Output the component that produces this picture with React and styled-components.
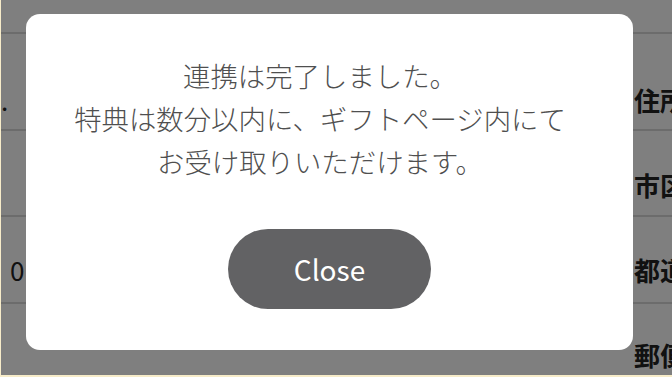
import React from "react";
import styled, { createGlobalStyle } from "styled-components";

const Global = createGlobalStyle`
  html, body { margin: 0; padding: 0; }
  body {
    background: #f7ecc9;
    font-family: "Noto Sans CJK JP", "Noto Sans", sans-serif;
  }
`;

const Page = styled.div`
  position: relative;
  margin-left: 1px;
  width: 671px;
  height: 375px;
  overflow: hidden;
  background: #ffffff;
`;

const Table = styled.div`
  display: flex;
  flex-direction: column;
`;

const Row = styled.div`
  display: flex;
  justify-content: space-between;
  align-items: flex-start;
  height: ${(p) => p.$h}px;
  padding-top: ${(p) => p.$pt}px;
  box-sizing: border-box;
  border-bottom: 2px solid #d9d9d9;
  flex-shrink: 0;
`;

const Value = styled.div`
  font-family: "Noto Sans CJK JP", sans-serif;
  font-size: 26px;
  line-height: 30px;
  color: #222;
  padding-left: ${(p) => p.$pl}px;
`;

const Label = styled.div`
  width: 38px;
  white-space: nowrap;
  overflow: hidden;
  font-family: "Noto Sans CJK JP", sans-serif;
  font-weight: 700;
  font-size: 26px;
  line-height: 30px;
  color: #222;
`;

const Overlay = styled.div`
  position: absolute;
  inset: 0;
  background: rgba(0, 0, 0, 0.5);
  padding: 14px 0 0 25px;
  box-sizing: border-box;
`;

const Modal = styled.div`
  width: 607px;
  height: 336px;
  box-sizing: border-box;
  background: #ffffff;
  border-radius: 14px;
  padding-top: 40px;
  display: flex;
  flex-direction: column;
  align-items: center;
`;

const Message = styled.p`
  margin: 0 19px 0 0;
  font-size: 27.4px;
  line-height: 43px;
  color: #4f4f4f;
  text-align: center;
  font-weight: 300;
`;

const CloseButton = styled.button`
  margin-top: 46px;
  width: 203px;
  height: 80px;
  border: none;
  border-radius: 40px;
  background: #626264;
  color: #ffffff;
  font-family: "Noto Sans CJK JP", sans-serif;
  font-size: 28px;
  font-weight: 400;
  padding: 0;
  cursor: pointer;
`;

const rows = [
  { h: 34, pt: 0, v: "", pl: 0, l: "" },
  { h: 97, pt: 51, v: ".", pl: 0, l: "住所" },
  { h: 86, pt: 39, v: "", pl: 0, l: "市区" },
  { h: 87, pt: 38, v: "0", pl: 9, l: "都道" },
  { h: 80, pt: 36, v: "", pl: 0, l: "郵便" },
];

export default function App() {
  return (
    <>
      <Global />
      <Page>
        <Table>
          {rows.map((r, i) => (
            <Row key={i} $h={r.h} $pt={r.pt}>
              <Value $pl={r.pl}>{r.v}</Value>
              <Label>{r.l}</Label>
            </Row>
          ))}
        </Table>
        <Overlay>
          <Modal>
            <Message>
              連携は完了しました。
              <br />
              特典は数分以内に、ギフトページ内にて
              <br />
              お受け取りいただけます。
            </Message>
            <CloseButton>Close</CloseButton>
          </Modal>
        </Overlay>
      </Page>
    </>
  );
}
